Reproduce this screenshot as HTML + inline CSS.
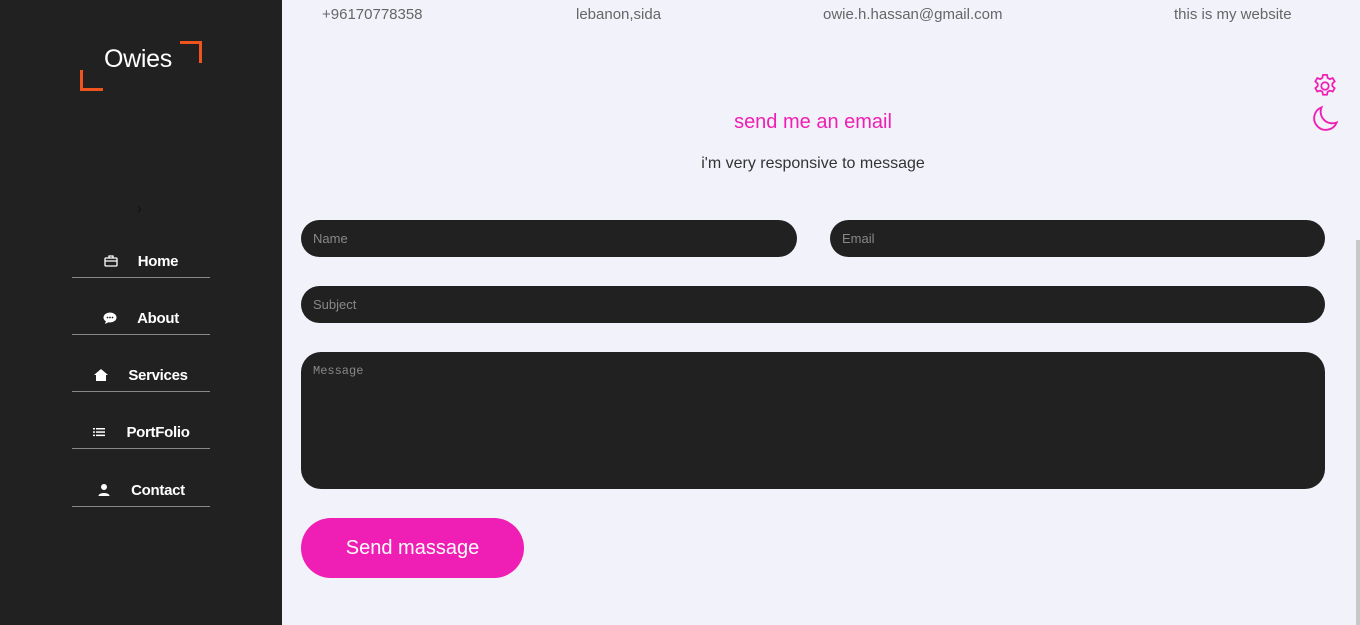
<!DOCTYPE html>
<html><head><style>
*{margin:0;padding:0;box-sizing:border-box}
body{width:1360px;height:625px;overflow:hidden;background:#f2f2fb;font-family:"Liberation Sans",sans-serif;position:relative}
.side{position:absolute;left:0;top:0;width:282px;height:625px;background:#212121}
.logo{position:absolute;left:104px;top:45px;color:#fff;font-size:25px;letter-spacing:-0.3px}
.c1{position:absolute;left:80px;top:70px;width:23px;height:21px;border-left:3px solid #f0541e;border-bottom:3px solid #f0541e}
.c2{position:absolute;left:180px;top:41px;width:22px;height:22px;border-right:3px solid #f0541e;border-top:3px solid #f0541e}
.chev{position:absolute;left:137px;top:200px;color:#111;font-size:14px}
.nav{position:absolute;left:72px;width:138px;height:40px;border-bottom:1px solid #888;color:#fff;font-weight:bold;font-size:15px;letter-spacing:-0.3px;display:flex;align-items:flex-end;padding-bottom:7px;justify-content:center;gap:20px}
.nav svg{width:14px;height:14px;margin-bottom:2px}
.top{position:absolute;top:5px;color:#666;font-size:15px}
h2{position:absolute;left:0;width:1626px;top:111px;text-align:center;color:#ef1fb5;font-weight:normal;font-size:20px}
.sub{position:absolute;left:0;width:1626px;top:155px;text-align:center;color:#333;font-size:16px}
.inp{position:absolute;background:#212121;border-radius:19px;color:#888;font-size:13px;padding-left:12px;display:flex;align-items:center}
.btn{position:absolute;left:301px;top:518px;width:223px;height:60px;background:#ef1fb5;border-radius:30px;color:#fff;font-size:20px;display:flex;align-items:center;justify-content:center}
.sb{position:absolute;left:1356px;top:240px;width:4px;height:385px;background:#c8c8c8}
</style></head><body>
<div class="side">
<div class="c1"></div><div class="c2"></div>
<div class="logo">Owies</div>
<div class="chev">›</div>
<div class="nav" style="top:238px"><svg viewBox="0 0 14 14" fill="none" stroke="#fff" stroke-width="1.3"><rect x="1" y="4" width="12" height="8" rx="1"/><path d="M5 4V2h4v2M1 7h12"/></svg>Home</div>
<div class="nav" style="top:295px"><svg viewBox="0 0 14 14"><ellipse cx="7" cy="6.5" rx="6.5" ry="5" fill="#fff"/><path d="M3 10l-1 3 4-2z" fill="#fff"/><circle cx="4.5" cy="6.5" r=".9" fill="#222"/><circle cx="7" cy="6.5" r=".9" fill="#222"/><circle cx="9.5" cy="6.5" r=".9" fill="#222"/></svg>About</div>
<div class="nav" style="top:352px"><svg viewBox="0 0 14 14" fill="#fff"><path d="M7 1L0 7h2v6h10V7h2z"/></svg>Services</div>
<div class="nav" style="top:409px"><svg viewBox="0 0 14 14" fill="#fff"><rect x="1" y="3" width="2" height="1.5"/><rect x="4" y="3" width="9" height="1.5"/><rect x="1" y="6.3" width="2" height="1.5"/><rect x="4" y="6.3" width="9" height="1.5"/><rect x="1" y="9.6" width="2" height="1.5"/><rect x="4" y="9.6" width="9" height="1.5"/></svg>PortFolio</div>
<div class="nav" style="top:467px"><svg viewBox="0 0 14 14" fill="#fff"><circle cx="7" cy="4" r="3"/><path d="M1.5 13c0-4 11-4 11 0z"/></svg>Contact</div>
</div>
<div class="top" style="left:322px;top:6px">+96170778358</div>
<div class="top" style="left:576px;top:6px">lebanon,sida</div>
<div class="top" style="left:823px;top:6px">owie.h.hassan@gmail.com</div>
<div class="top" style="left:1174px;top:6px">this is my website</div>
<svg style="position:absolute;left:1311px;top:72px" width="28" height="28" viewBox="0 0 24 24" fill="none" stroke="#ef1fb5" stroke-width="1.5"><circle cx="12" cy="12" r="3.2"/><path d="M10.3 2.5h3.4l.6 2.6 1.8 1 2.5-.9 1.7 2.9-2 1.8v2.2l2 1.8-1.7 2.9-2.5-.9-1.8 1-.6 2.6h-3.4l-.6-2.6-1.8-1-2.5.9-1.7-2.9 2-1.8v-2.2l-2-1.8 1.7-2.9 2.5.9 1.8-1z"/></svg>
<svg style="position:absolute;left:1311px;top:105px" width="28" height="28" viewBox="0 0 24 24" fill="none" stroke="#ef1fb5" stroke-width="1.6"><path d="M9 2a10 10 0 0 0 13 13A10 10 0 1 1 9 2z"/></svg>
<h2>send me an email</h2>
<div class="sub">i'm very responsive to message</div>
<div class="inp" style="left:301px;top:220px;width:496px;height:37px">Name</div>
<div class="inp" style="left:830px;top:220px;width:495px;height:37px">Email</div>
<div class="inp" style="left:301px;top:286px;width:1024px;height:37px">Subject</div>
<div class="inp" style="left:301px;top:352px;width:1024px;height:137px;align-items:flex-start;padding-top:12px;font-family:'Liberation Mono',monospace;font-size:12px;border-radius:20px">Message</div>
<div class="btn">Send massage</div>
<div class="sb"></div>
</body></html>
